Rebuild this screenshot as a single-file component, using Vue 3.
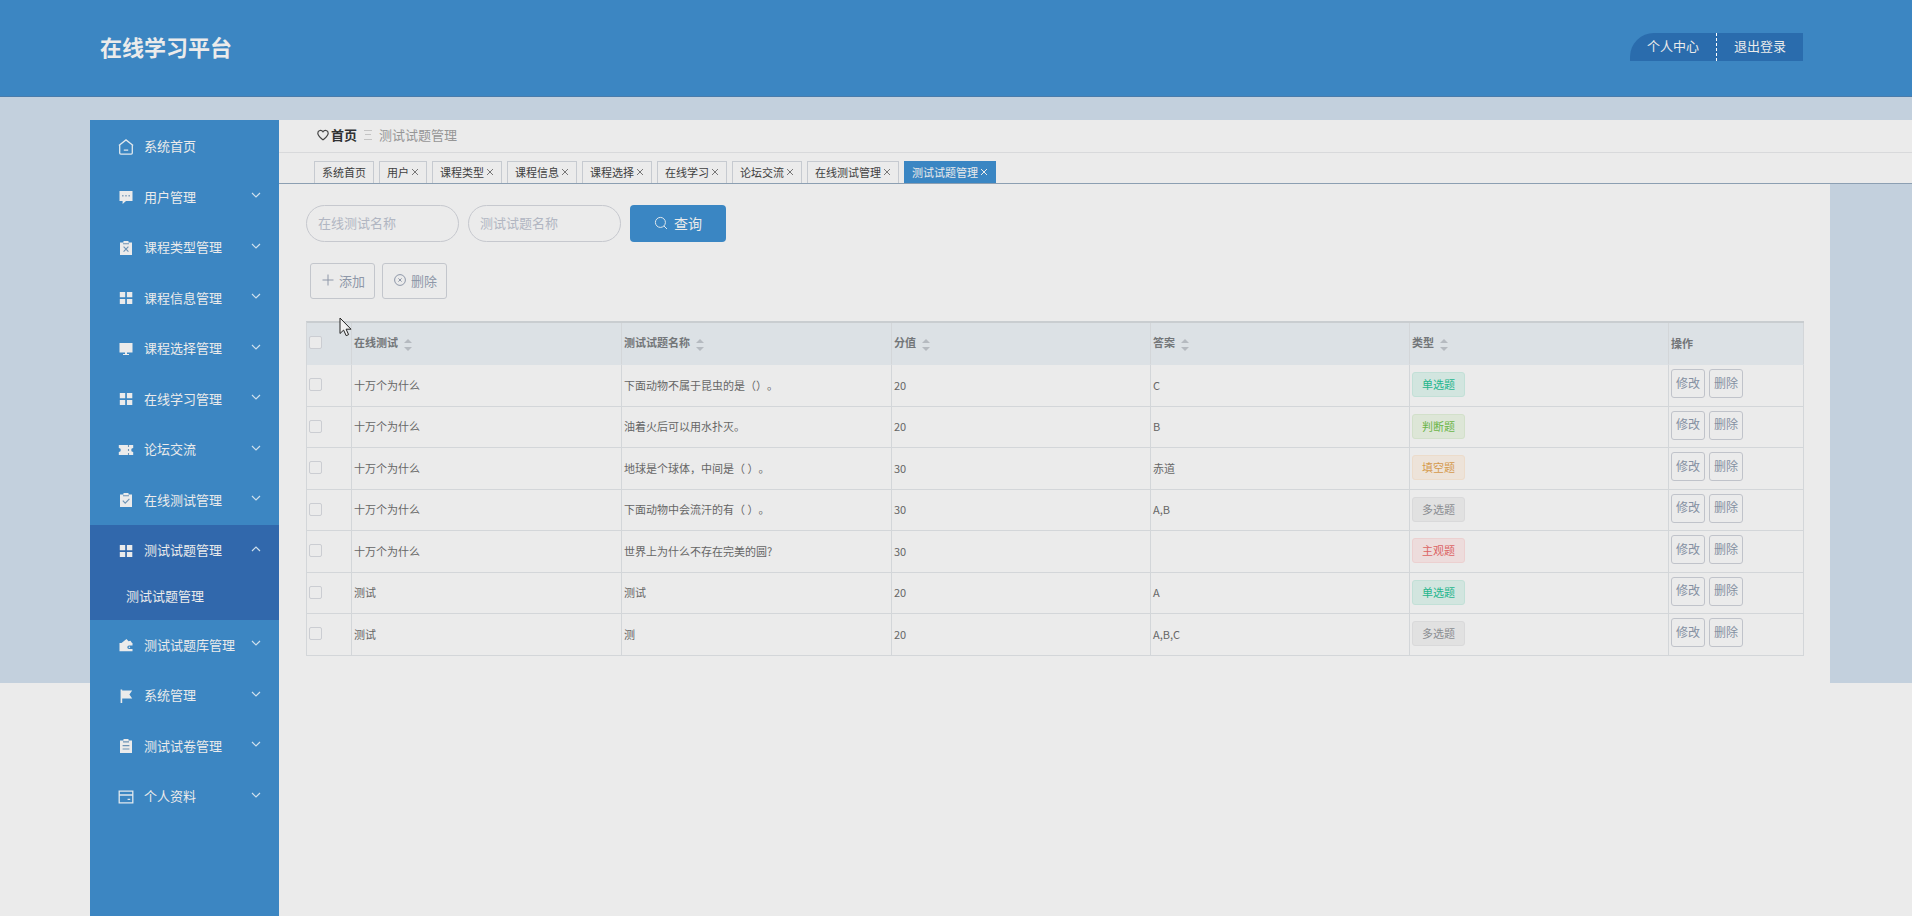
<script setup>
import { ref } from 'vue'

const menu = [
  { icon: 'home', label: '系统首页', leaf: true },
  { icon: 'chat', label: '用户管理' },
  { icon: 'release', label: '课程类型管理' },
  { icon: 'grid', label: '课程信息管理' },
  { icon: 'monitor', label: '课程选择管理' },
  { icon: 'grid', label: '在线学习管理' },
  { icon: 'ticket', label: '论坛交流' },
  { icon: 'claim', label: '在线测试管理' },
  { icon: 'grid', label: '测试试题管理', children: ['测试试题管理'] },
  { icon: 'wallet', label: '测试试题库管理' },
  { icon: 'flag', label: '系统管理' },
  { icon: 'order', label: '测试试卷管理' },
  { icon: 'card', label: '个人资料' }
]

const tabs = ['系统首页', '用户', '课程类型', '课程信息', '课程选择', '在线学习', '论坛交流', '在线测试管理', '测试试题管理']
const activeTab = tabs.length - 1

const columns = ['在线测试', '测试试题名称', '分值', '答案', '类型']

const rows = [
  { test: '十万个为什么', name: '下面动物不属于昆虫的是（）。', score: 20, answer: 'C', type: '单选题', tone: 'teal' },
  { test: '十万个为什么', name: '油着火后可以用水扑灭。', score: 20, answer: 'B', type: '判断题', tone: 'green' },
  { test: '十万个为什么', name: '地球是个球体，中间是（ ）。', score: 30, answer: '赤道', type: '填空题', tone: 'orange' },
  { test: '十万个为什么', name: '下面动物中会流汗的有（ ）。', score: 30, answer: 'A,B', type: '多选题', tone: 'gray' },
  { test: '十万个为什么', name: '世界上为什么不存在完美的圆?', score: 30, answer: '', type: '主观题', tone: 'red' },
  { test: '测试', name: '测试', score: 20, answer: 'A', type: '单选题', tone: 'teal' },
  { test: '测试', name: '测', score: 20, answer: 'A,B,C', type: '多选题', tone: 'gray' }
]

const testName = ref('')
const questionName = ref('')
</script>

<template>
  <div class="page">
    <header class="top">
      <h1>在线学习平台</h1>
      <nav class="account">
        <a href="#">个人中心</a>
        <a href="#">退出登录</a>
      </nav>
    </header>

    <div class="body">
      <aside class="side">
        <ul class="menu">
          <li v-for="(item, i) in menu" :key="i" :class="{ open: item.children }">
            <a href="#" class="entry">
              <svg class="icon" viewBox="0 0 16 16" aria-hidden="true">
                <g v-if="item.icon === 'home'" class="line">
                  <path d="M.9 6.6 8 .9l7.1 5.7M1.7 6v8c0 .7.4 1.1 1.1 1.1h10.4c.7 0 1.1-.4 1.1-1.1V6M5.8 11.2h4.4" />
                </g>
                <template v-else-if="item.icon === 'chat'">
                  <path d="M1.5 2h13v10H8l-3.4 3v-3H1.5z" />
                  <path class="cut-dot" d="M4 6h1.6v1.6H4zM7.2 6h1.6v1.6H7.2zM10.4 6H12v1.6h-1.6z" />
                </template>
                <template v-else-if="item.icon === 'release'">
                  <path d="M2 2.5h3.5V1h5v1.5H14V15H2z" />
                  <path class="cut" d="M5 3.7h6M5.6 6.6l4.8 5M10.4 6.6l-4.8 5" />
                </template>
                <path v-else-if="item.icon === 'grid'" d="M1.8 2h5.4v5.2H1.8zM8.9 2h5.4v5.2H8.9zM1.8 8.9h5.4v5.2H1.8zM8.9 8.9h5.4v5.2H8.9z" />
                <path v-else-if="item.icon === 'monitor'" d="M1.5 2h13v9.5h-13zM7 11.5h2V13h2v1H5v-1h2z" />
                <template v-else-if="item.icon === 'ticket'">
                  <path d="M.8 3h14.4v3a2 2 0 0 0 0 4v3H.8v-3a2 2 0 0 0 0-4z" />
                  <path class="cut" d="M10.5 3v2M10.5 7v2M10.5 11v2" />
                </template>
                <template v-else-if="item.icon === 'claim'">
                  <path d="M2 2.5h3.5V1h5v1.5H14V15H2z" />
                  <path class="cut" d="M5 3.7h6M4.8 8.6l2.4 2.6 4.2-4.4" />
                </template>
                <template v-else-if="item.icon === 'wallet'">
                  <path d="M1.5 6h2l5-4 2 2.2 2-.4L14 6h.5v2.5H11a1.7 1.7 0 0 0 0 3.4h3.5v2.3h-13z" />
                  <circle cx="11.4" cy="10.2" r=".8" />
                </template>
                <path v-else-if="item.icon === 'flag'" d="M2.6 1.5h1.6v1h10L11.4 6.4l2.8 4H4.2V15H2.6z" />
                <template v-else-if="item.icon === 'order'">
                  <path d="M2 2.5h3.5V1h5v1.5H14V15H2z" />
                  <path class="cut" d="M5 3.9h6M4.6 7.6h6.8M4.6 11h6.8" />
                </template>
                <g v-else class="line">
                  <path d="M1.2 2.2h13.6v11.6H1.2zM1.2 6h13.6M9.6 10.4h2.6" />
                </g>
              </svg>
              <span>{{ item.label }}</span>
              <svg v-if="!item.leaf" class="chevron" viewBox="0 0 10 10" aria-hidden="true">
                <path :d="item.children ? 'M1 7l4-4 4 4' : 'M1 3l4 4 4-4'" />
              </svg>
            </a>
            <a v-for="child in item.children" :key="child" href="#" class="child">{{ child }}</a>
          </li>
        </ul>
      </aside>

      <main class="main">
        <nav class="crumbs">
          <svg class="heart" viewBox="0 0 12 12" aria-hidden="true">
            <path d="M6 10.8C3.4 8.6.8 6.9.8 4.2c0-3.2 3.8-3.6 5.2-1.4 1.4-2.2 5.2-1.8 5.2 1.4 0 2.7-2.6 4.4-5.2 6.6z" />
          </svg>
          <a href="#">首页</a>
          <svg class="sep" viewBox="0 0 8 10" aria-hidden="true"><path d="M0 .5h8M1 4.5h6M0 9.5h8" /></svg>
          <span>测试试题管理</span>
        </nav>

        <nav class="tabs">
          <a v-for="(tab, i) in tabs" :key="tab" href="#" :class="{ active: i === activeTab }">
            {{ tab }}<svg v-if="i" viewBox="0 0 8 8" aria-hidden="true"><path d="M1 1l6 6M7 1 1 7" /></svg>
          </a>
        </nav>

        <section class="panel">
          <form class="search" @submit.prevent>
            <input v-model="testName" type="text" placeholder="在线测试名称" aria-label="在线测试名称" />
            <input v-model="questionName" type="text" placeholder="测试试题名称" aria-label="测试试题名称" />
            <button type="submit">
              <svg viewBox="0 0 14 14" aria-hidden="true"><circle cx="6.4" cy="6.4" r="5" /><path d="M10 10l3 3" /></svg>
              查询
            </button>
          </form>

          <div class="actions">
            <button type="button">
              <svg viewBox="0 0 12 12" aria-hidden="true"><path d="M6 .5v11M.5 6h11" /></svg>添加
            </button>
            <button type="button">
              <svg viewBox="0 0 12 12" aria-hidden="true"><circle cx="6" cy="6" r="5.4" /><path d="M4.4 4.4l3.2 3.2M7.6 4.4 4.4 7.6" /></svg>删除
            </button>
          </div>

          <table>
            <colgroup>
              <col class="c-check" /><col class="c-wide" /><col class="c-wide" />
              <col class="c-mid" /><col class="c-mid" /><col class="c-mid" /><col class="c-ops" />
            </colgroup>
            <thead>
              <tr>
                <th><input type="checkbox" aria-label="全选" /></th>
                <th v-for="c in columns" :key="c">
                  {{ c }}<svg viewBox="0 0 8 12" aria-hidden="true"><path d="M4 0l4 4H0zM4 12L0 8h8z" /></svg>
                </th>
                <th>操作</th>
              </tr>
            </thead>
            <tbody>
              <tr v-for="(r, i) in rows" :key="i">
                <td><input type="checkbox" :aria-label="r.name" /></td>
                <td>{{ r.test }}</td>
                <td>{{ r.name }}</td>
                <td>{{ r.score }}</td>
                <td>{{ r.answer }}</td>
                <td><span class="tag" :class="r.tone">{{ r.type }}</span></td>
                <td>
                  <div class="ops">
                    <button type="button">修改</button>
                    <button type="button">删除</button>
                  </div>
                </td>
              </tr>
            </tbody>
          </table>

          <svg class="pointer" viewBox="0 0 13 20" aria-hidden="true">
            <path d="M1 1v15.5l3.6-3.4 2.6 5.6 2.4-1.1-2.5-5.4h4.9z" />
          </svg>
        </section>
      </main>
    </div>
  </div>
</template>

<style>
body {
  background: #ebebeb;
}
</style>

<style scoped>
* {
  box-sizing: border-box;
}

.page {
  min-height: 100vh;
  display: flex;
  flex-direction: column;
  background: linear-gradient(#c3d0dd 683px, #ebebeb 683px);
  font-family: "Noto Sans CJK SC", "Noto Sans", sans-serif;
  font-size: 13px;
  color: #666;
  text-spacing-trim: space-all;
}

a {
  color: inherit;
  text-decoration: none;
}

button,
input {
  font: inherit;
}

.top {
  display: flex;
  align-items: center;
  justify-content: space-between;
  height: 97px;
  padding: 0 109px 2px 100px;
  background: #3c86c2;
  border-bottom: 1px solid #4a7cab;
}

.top h1 {
  margin: 0;
  padding-bottom: 2px;
  font-size: 22px;
  line-height: 32px;
  color: #ebebeb;
}

.account {
  display: flex;
  overflow: hidden;
  border-top-left-radius: 24px;
  background: #2a6cad;
  color: #ebebeb;
  line-height: 26px;
}

.account a {
  padding: 0 17px 2px;
}

.account a + a {
  border-left: 1px dashed #fff;
}

.body {
  flex: 1;
  display: flex;
  padding: 23px 0 0 90px;
}

.side {
  flex: none;
  width: 189px;
  padding-top: 1px;
  background: #3c86c2;
  color: #ebebeb;
}

.menu {
  margin: 0;
  padding: 0;
  list-style: none;
}

.entry {
  display: flex;
  align-items: center;
  height: 50px;
  padding: 0 18px 0 28px;
}

.menu li:nth-child(odd) .entry {
  height: 51px;
}

.entry span {
  flex: 1;
  padding-bottom: 2px;
}

.icon {
  width: 16px;
  height: 16px;
  margin-right: 10px;
  fill: #ebebeb;
}

.line {
  fill: none;
  stroke: #dfe8ee;
  stroke-width: 1.3;
}

.cut {
  fill: none;
  stroke: #6d93b5;
  stroke-width: 1.1;
}

.cut-dot {
  fill: #8aa6bf;
}

.chevron {
  width: 10px;
  height: 10px;
  margin-bottom: 4px;
  fill: none;
  stroke: #cfe0ec;
  stroke-width: 1.2;
}

.open {
  background: #3168ac;
}

.child {
  display: block;
  height: 44px;
  padding-left: 36px;
  line-height: 40px;
}

.main {
  flex: 1;
  min-width: 0;
  display: flex;
  flex-direction: column;
}

.crumbs {
  display: flex;
  align-items: center;
  height: 33px;
  padding: 0 38px 2px;
  background: #ebebeb;
  border-bottom: 1px solid #d8d9db;
  color: #969696;
}

.crumbs a,
.crumbs span {
  padding-bottom: 2px;
}

.crumbs a {
  margin-left: 2px;
  font-weight: bold;
  color: #303133;
}

.heart {
  width: 12px;
  height: 12px;
  fill: none;
  stroke: #444;
  stroke-width: 1.2;
}

.sep {
  width: 8px;
  height: 10px;
  margin: 0 7px;
  fill: none;
  stroke: #c4c4c4;
}

.tabs {
  display: flex;
  align-items: flex-end;
  gap: 5px;
  height: 31px;
  padding: 0 35px;
  background: #ebebeb;
  border-bottom: 1px solid #8c9fb2;
  font-size: 11px;
  line-height: 16px;
  color: #404040;
}

.tabs a {
  display: flex;
  align-items: center;
  gap: 2px;
  height: 22px;
  padding: 0 7px 2px;
  border: 1px solid #c6cad0;
  border-bottom: 0;
}

.tabs svg {
  width: 8px;
  height: 8px;
  fill: none;
  stroke: #777;
}

.tabs .active {
  background: #3a86c3;
  border-color: #3a86c3;
  color: #ebebeb;
}

.tabs .active svg {
  stroke: #ebebeb;
}

.panel {
  position: relative;
  flex: 1;
  margin-right: 82px;
  padding: 21px 28px 21px 27px;
  background: #ebebeb;
}

.search {
  display: flex;
  align-items: center;
  gap: 9px;
}

.search input {
  width: 153px;
  height: 37px;
  padding: 0 11px 2px;
  border: 1px solid #c6c8ce;
  border-radius: 19px;
  outline: 0;
  background: transparent;
  color: #666;
}

.search input::placeholder {
  color: #b1b6c2;
  opacity: 1;
}

.search button {
  display: flex;
  align-items: center;
  justify-content: center;
  gap: 6px;
  width: 96px;
  height: 37px;
  padding: 0 0 2px;
  border: 0;
  border-radius: 4px;
  background: #3a86c3;
  color: #ebebeb;
  font-size: 14px;
}

.search svg {
  width: 14px;
  height: 14px;
  fill: none;
  stroke: #dfe8ee;
}

.actions {
  display: flex;
  gap: 7px;
  margin: 21px 4px 22px;
}

.actions button {
  display: flex;
  align-items: center;
  justify-content: center;
  gap: 5px;
  width: 65px;
  height: 36px;
  padding: 0 0 2px 2px;
  border: 1px solid #c3c6cc;
  border-radius: 3px;
  background: transparent;
  color: #8e97a8;
}

.actions svg {
  width: 12px;
  height: 12px;
  fill: none;
  stroke: #8e97a8;
}

table {
  width: 100%;
  table-layout: fixed;
  border-collapse: separate;
  border-spacing: 0;
  border-top: 2px solid #c9cdd0;
  border-left: 1px solid #d3d6d9;
  font-size: 11px;
  line-height: 16px;
}

.c-check {
  width: 45px;
}

.c-wide {
  width: 270px;
}

.c-mid {
  width: 259px;
}

.c-ops {
  width: 135px;
}

th,
td {
  padding: 0 2px 2px;
  border-right: 1px solid #d3d6d9;
  border-bottom: 1px solid #d3d6d9;
  text-align: left;
}

th {
  height: 42px;
  background: #dce1e5;
  color: #737679;
  border-bottom-color: #dce1e5;
}

td {
  height: 41px;
}

tbody tr:nth-child(odd) td {
  height: 42px;
}

th svg {
  width: 8px;
  height: 12px;
  margin-left: 6px;
  vertical-align: middle;
  fill: #b5bac0;
}

table input {
  display: block;
  width: 13px;
  height: 13px;
  margin: 0;
  appearance: none;
  border: 1px solid #cbcdd2;
  border-radius: 2px;
  background: #ebebeb;
}

.tag {
  display: inline-block;
  padding: 0 9px;
  border: 1px solid;
  border-radius: 3px;
  line-height: 23px;
  vertical-align: middle;
}

.teal {
  background: #d2e5df;
  border-color: #c2e0d7;
  color: #1fb58d;
}

.green {
  background: #dde6d7;
  border-color: #d2e0ca;
  color: #6bb548;
}

.orange {
  background: #ede3d9;
  border-color: #ecdccb;
  color: #d59a4d;
}

.gray {
  background: #e1e1e1;
  border-color: #d9d9da;
  color: #8b8d91;
}

.red {
  background: #eddcdc;
  border-color: #ecd0d0;
  color: #dc6464;
}

.ops {
  display: flex;
  gap: 4px;
  padding-bottom: 2px;
}

.ops button {
  height: 29px;
  padding: 0 4px 2px;
  border: 1px solid #c0c3ca;
  border-radius: 3px;
  background: transparent;
  color: #8590a2;
  font-size: 12px;
}

.pointer {
  position: absolute;
  top: 133px;
  left: 60px;
  width: 13px;
  height: 20px;
  fill: #f2f2f2;
  stroke: #222;
}
</style>
